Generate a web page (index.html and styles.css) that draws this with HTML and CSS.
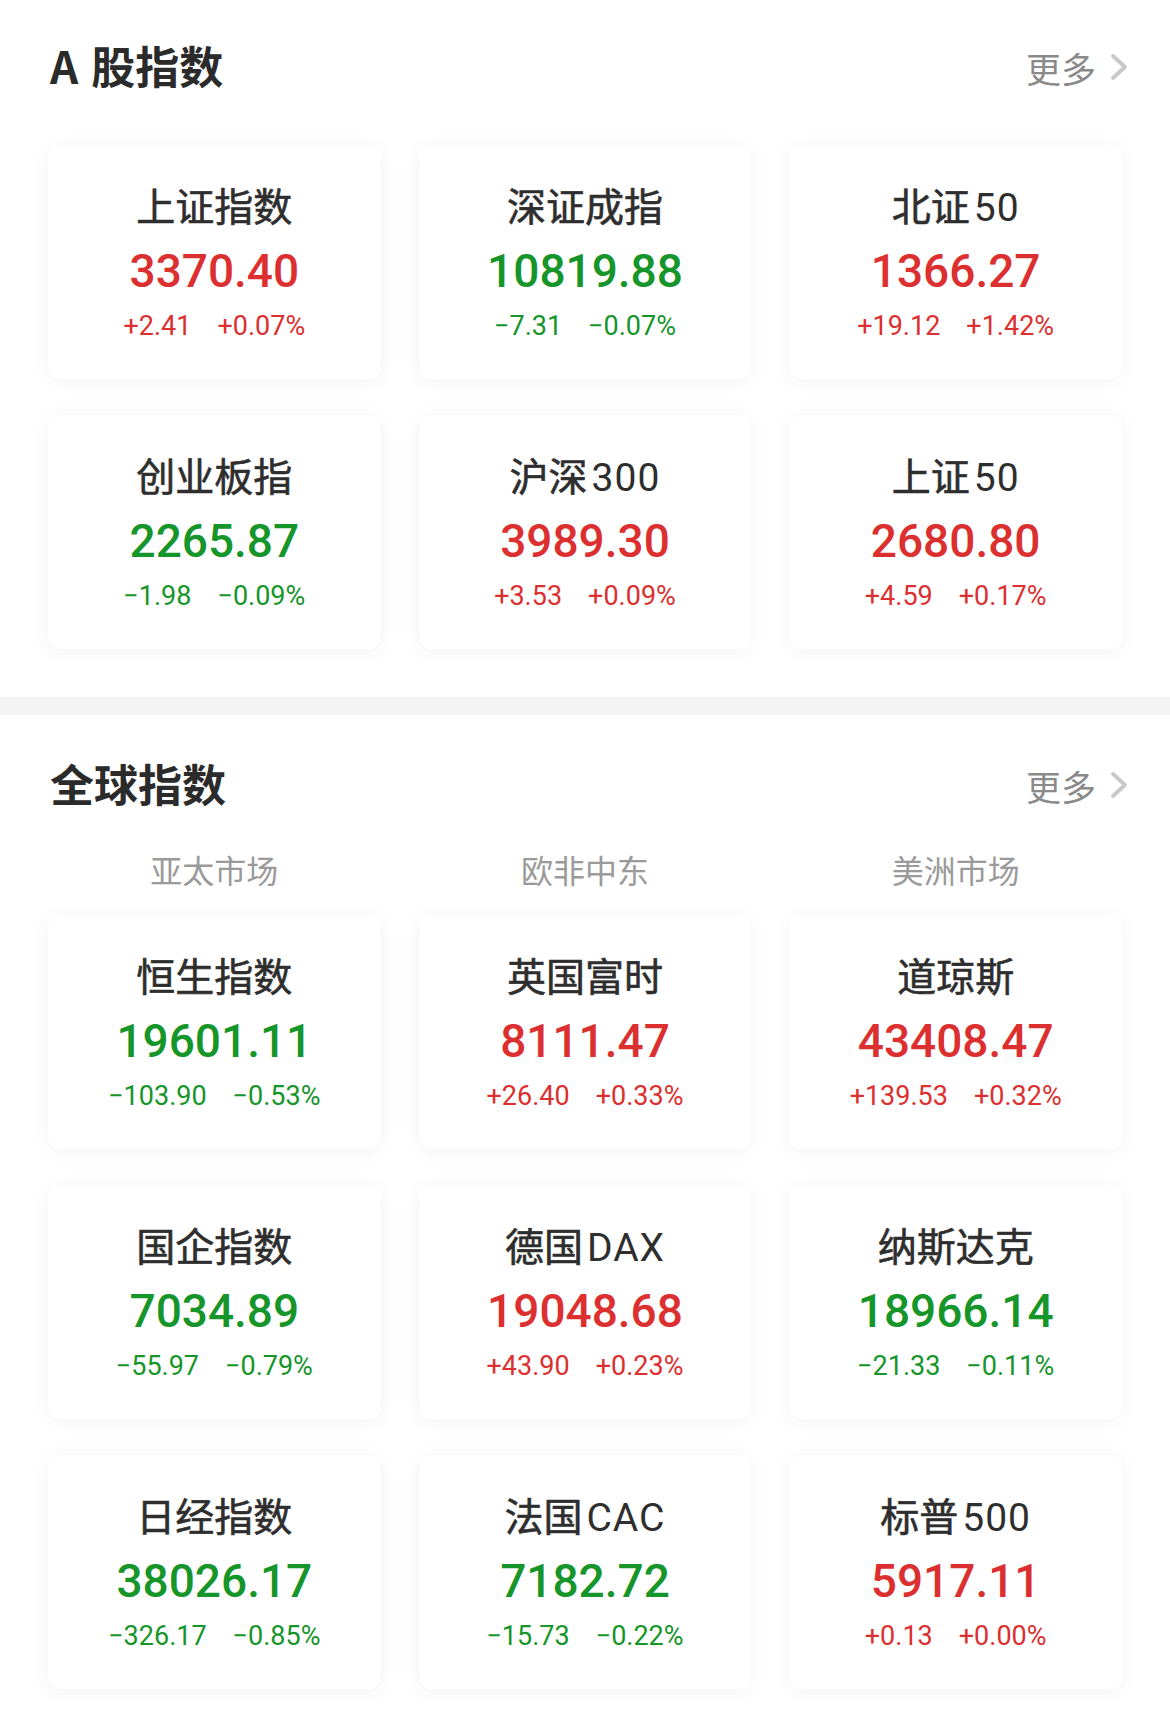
FILE: index.html
```html
<!DOCTYPE html>
<html lang="zh-CN">
<head>
<meta charset="utf-8">
<title>指数</title>
<link rel="stylesheet" href="styles.css">
</head>
<body>
<section class="block block-a">
  <header class="head">
    <h2 class="title"><span class="lat">A</span>股指数</h2>
    <a class="more">更多<svg class="chev" viewBox="0 0 22 30" width="22" height="30"><path d="M5 4 L17 15 L5 26" fill="none" stroke="#c8c8c8" stroke-width="3.8" stroke-linecap="round" stroke-linejoin="round"/></svg></a>
  </header>
  <div class="grid">
    <div class="card"><div class="name">上证指数</div><div class="val up">3370.40</div><div class="chg up"><span>+2.41</span><span>+0.07%</span></div></div>
    <div class="card"><div class="name">深证成指</div><div class="val down">10819.88</div><div class="chg down"><span>−7.31</span><span>−0.07%</span></div></div>
    <div class="card"><div class="name">北证<span class="num">50</span></div><div class="val up">1366.27</div><div class="chg up"><span>+19.12</span><span>+1.42%</span></div></div>
    <div class="card"><div class="name">创业板指</div><div class="val down">2265.87</div><div class="chg down"><span>−1.98</span><span>−0.09%</span></div></div>
    <div class="card"><div class="name">沪深<span class="num">300</span></div><div class="val up">3989.30</div><div class="chg up"><span>+3.53</span><span>+0.09%</span></div></div>
    <div class="card"><div class="name">上证<span class="num">50</span></div><div class="val up">2680.80</div><div class="chg up"><span>+4.59</span><span>+0.17%</span></div></div>
  </div>
</section>
<div class="band"></div>
<section class="block block-g">
  <header class="head">
    <h2 class="title">全球指数</h2>
    <a class="more">更多<svg class="chev" viewBox="0 0 22 30" width="22" height="30"><path d="M5 4 L17 15 L5 26" fill="none" stroke="#c8c8c8" stroke-width="3.8" stroke-linecap="round" stroke-linejoin="round"/></svg></a>
  </header>
  <div class="tabs">
    <div class="tab">亚太市场</div>
    <div class="tab">欧非中东</div>
    <div class="tab">美洲市场</div>
  </div>
  <div class="grid">
    <div class="card"><div class="name">恒生指数</div><div class="val down">19601.11</div><div class="chg down"><span>−103.90</span><span>−0.53%</span></div></div>
    <div class="card"><div class="name">英国富时</div><div class="val up">8111.47</div><div class="chg up"><span>+26.40</span><span>+0.33%</span></div></div>
    <div class="card"><div class="name">道琼斯</div><div class="val up">43408.47</div><div class="chg up"><span>+139.53</span><span>+0.32%</span></div></div>
    <div class="card"><div class="name">国企指数</div><div class="val down">7034.89</div><div class="chg down"><span>−55.97</span><span>−0.79%</span></div></div>
    <div class="card"><div class="name">德国<span class="num">DAX</span></div><div class="val up">19048.68</div><div class="chg up"><span>+43.90</span><span>+0.23%</span></div></div>
    <div class="card"><div class="name">纳斯达克</div><div class="val down">18966.14</div><div class="chg down"><span>−21.33</span><span>−0.11%</span></div></div>
    <div class="card"><div class="name">日经指数</div><div class="val down">38026.17</div><div class="chg down"><span>−326.17</span><span>−0.85%</span></div></div>
    <div class="card"><div class="name">法国<span class="num">CAC</span></div><div class="val down">7182.72</div><div class="chg down"><span>−15.73</span><span>−0.22%</span></div></div>
    <div class="card"><div class="name">标普<span class="num">500</span></div><div class="val up">5917.11</div><div class="chg up"><span>+0.13</span><span>+0.00%</span></div></div>
  </div>
</section>
</body>
</html>
```
FILE: styles.css
```css
* { box-sizing: border-box; }
html, body { margin: 0; padding: 0; background: #fff; }
body {
  width: 1170px;
  height: 1731px;
  overflow: hidden;
  font-family: Roboto, "Noto Sans CJK SC", sans-serif;
  color: #333;
}
.block { padding: 0 48px; }
.block-a { padding-top: 20px; padding-bottom: 48px; }
.block-g { padding-top: 23px; }
.head {
  display: flex;
  align-items: center;
  justify-content: space-between;
  height: 90px;
  margin-right: -8px;
}
.title {
  margin: 0 0 0 2px;
  font-family: "Noto Sans CJK SC", sans-serif;
  font-size: 44px;
  font-weight: 700;
  color: #2b2b2b;
  line-height: 1;
}
.title .lat { margin-right: 13px; }
.more {
  display: flex;
  align-items: center;
  gap: 12px;
  font-family: "Noto Sans CJK SC", sans-serif;
  font-size: 35px;
  color: #8a8a8a;
  line-height: 1;
  margin-top: 4px;
}
.chev { display: block; }
.block-a .grid { margin-top: 35px; }
.tabs {
  display: grid;
  grid-template-columns: repeat(3, 1fr);
  column-gap: 38px;
  margin-top: 19px;
}
.tab {
  text-align: center;
  font-family: "Noto Sans CJK SC", sans-serif;
  font-size: 32px;
  line-height: 44px;
  color: #9a9a9a;
}
.block-g .grid { margin-top: 24px; }
.grid {
  display: grid;
  grid-template-columns: repeat(3, 1fr);
  column-gap: 38px;
  row-gap: 36px;
}
.card {
  height: 234px;
  background: #fff;
  border-radius: 12px;
  box-shadow: 0 2px 18px rgba(0, 0, 0, 0.055);
  display: flex;
  flex-direction: column;
  align-items: center;
  padding-top: 36px;
}
.name {
  height: 46px;
  font-family: "Noto Sans CJK SC", sans-serif;
  font-size: 39px;
  line-height: 46px;
  font-weight: 400;
  -webkit-text-stroke: 0.6px #2e2e2e;
  color: #2e2e2e;
  white-space: nowrap;
}
.name .num {
  font-family: Roboto, "Noto Sans CJK SC", sans-serif;
  font-weight: 400;
  -webkit-text-stroke: 0;
  line-height: 1;
  margin-left: 4px;
  letter-spacing: 1px;
}
.val {
  margin-top: 16px;
  font-size: 46px;
  line-height: 56px;
  font-weight: 500;
}
.chg {
  margin-top: 10px;
  display: flex;
  gap: 26px;
  font-size: 27px;
  line-height: 34px;
}
.up { color: #dc2f2f; }
.down { color: #16952a; }
.band {
  height: 18px;
  background: #f4f4f4;
}
```
